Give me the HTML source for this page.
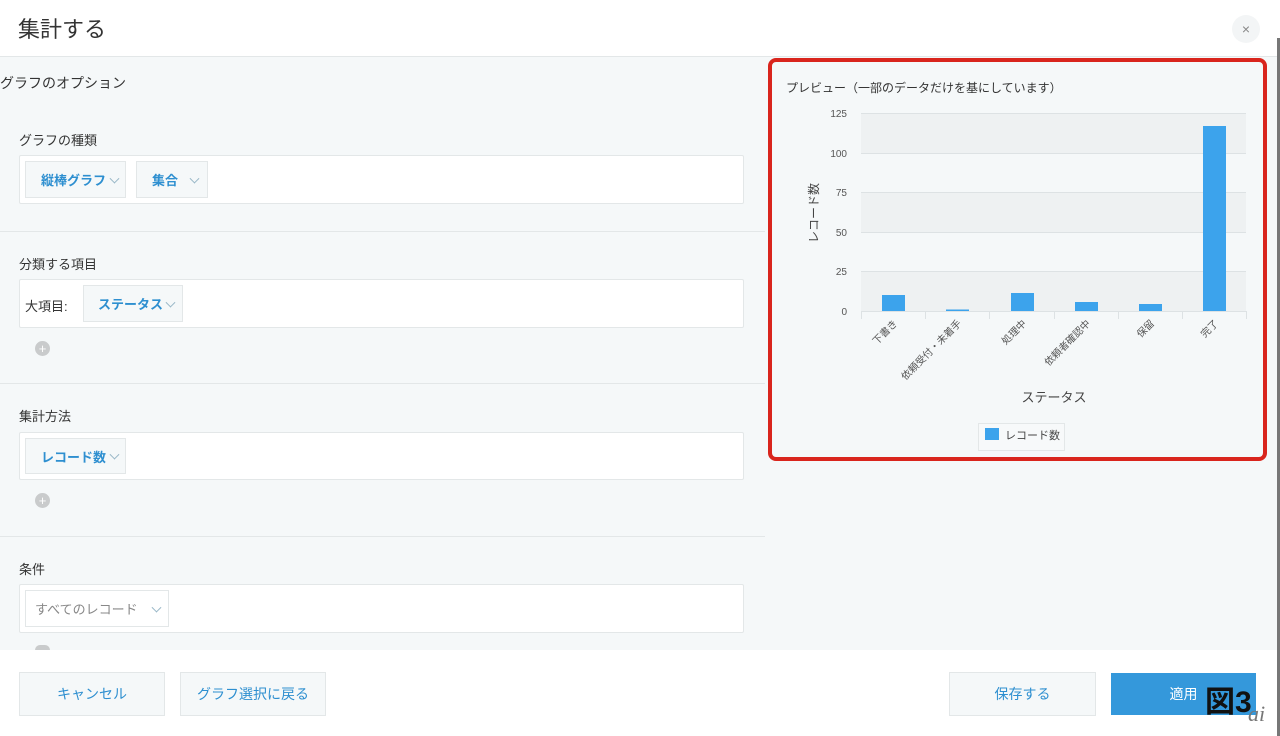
<!DOCTYPE html>
<html><head><meta charset="utf-8"><style>
*{box-sizing:border-box;margin:0;padding:0}
body{width:1280px;height:736px;overflow:hidden;background:#fff;font-family:"Liberation Sans","Noto Sans CJK JP",sans-serif;position:relative;color:#333}
.a{position:absolute}
.hdr{left:0;top:0;width:1277px;height:57px;background:#fff;border-bottom:1px solid #e3e7e8}
.body{left:0;top:57px;width:1277px;height:593px;background:#f5f8f9}
.lbl{font-size:13px;color:#333}
.box{background:#fff;border:1px solid #e3e7e8;border-radius:2px}
.dd{background:#f5f8f9;border:1px solid #e3e7e8;color:#2e8fd0;font-weight:bold;font-size:13px;display:flex;align-items:center}
.dd i{position:absolute;top:50%;width:7px;height:7px;border-right:1px solid #9ab8c8;border-bottom:1px solid #9ab8c8;transform:translateY(-70%) rotate(45deg)}
.sep{height:1px;background:#e3e7e8;left:0;width:765px}
.plus{width:15px;height:15px;border-radius:50%;background:#c9cbcc;color:#fff;font-size:13px;line-height:15px;text-align:center}
.btn{border:1px solid #e3e7e8;background:#f5f8f9;color:#2e8fd0;font-size:14px;display:flex;align-items:center;justify-content:center}
</style></head><body>
<div class="a hdr"></div>
<div class="a" style="left:18px;top:12px;font-size:22px;color:#333">集計する</div>
<div class="a" style="left:1232px;top:15px;width:28px;height:28px;border-radius:50%;background:#f3f5f6;color:#888;text-align:center;line-height:28px;font-size:14px">×</div>
<div class="a" style="left:1277px;top:38px;width:3px;height:698px;background:#777"></div>
<div class="a body"></div>
<div class="a lbl" style="left:0;top:73px;font-size:14px">グラフのオプション</div>

<div class="a lbl" style="left:19px;top:130px">グラフの種類</div>
<div class="a box" style="left:19px;top:155px;width:725px;height:49px"></div>
<div class="a dd" style="left:25px;top:161px;width:101px;height:37px;padding-left:15px">縦棒グラフ<i style="left:85px"></i></div>
<div class="a dd" style="left:136px;top:161px;width:72px;height:37px;padding-left:15px">集合<i style="left:54px"></i></div>
<div class="a sep" style="top:231px"></div>

<div class="a lbl" style="left:19px;top:254px">分類する項目</div>
<div class="a box" style="left:19px;top:279px;width:725px;height:49px"></div>
<div class="a lbl" style="left:25px;top:296px">大項目:</div>
<div class="a dd" style="left:83px;top:285px;width:100px;height:37px;padding-left:14px">ステータス<i style="left:83px"></i></div>
<div class="a plus" style="left:35px;top:341px">+</div>
<div class="a sep" style="top:383px"></div>

<div class="a lbl" style="left:19px;top:406px">集計方法</div>
<div class="a box" style="left:19px;top:432px;width:725px;height:48px"></div>
<div class="a dd" style="left:25px;top:438px;width:101px;height:36px;padding-left:15px">レコード数<i style="left:85px"></i></div>
<div class="a plus" style="left:35px;top:493px">+</div>
<div class="a sep" style="top:536px"></div>

<div class="a lbl" style="left:19px;top:559px">条件</div>
<div class="a box" style="left:19px;top:584px;width:725px;height:49px"></div>
<div class="a dd" style="left:25px;top:590px;width:144px;height:37px;padding-left:9px;background:#fff;color:#888;font-weight:normal">すべてのレコード<i style="left:127px"></i></div>
<div class="a plus" style="left:35px;top:645px;height:5px;border-radius:8px 8px 0 0"></div>

<div class="a" style="left:768px;top:58px;width:499px;height:403px;border:4px solid #d9251d;border-radius:8px;background:#f5f8f9"></div>
<svg class="a" style="left:0;top:0" width="1280" height="736" font-family="Liberation Sans, Noto Sans CJK JP, sans-serif">
<text x="786" y="92" font-size="12" fill="#333">プレビュー（一部のデータだけを基にしています）</text>
<rect x="861" y="113" width="385" height="40" fill="#eef1f2"/>
<rect x="861" y="192" width="385" height="40" fill="#eef1f2"/>
<rect x="861" y="271" width="385" height="40" fill="#eef1f2"/>
<g stroke="#dde2e4" stroke-width="1">
<line x1="861" y1="113.5" x2="1246" y2="113.5"/><line x1="861" y1="153.5" x2="1246" y2="153.5"/><line x1="861" y1="192.5" x2="1246" y2="192.5"/><line x1="861" y1="232.5" x2="1246" y2="232.5"/><line x1="861" y1="271.5" x2="1246" y2="271.5"/><line x1="861" y1="311.5" x2="1246" y2="311.5"/>
<line x1="861.5" y1="311" x2="861.5" y2="319"/><line x1="925.5" y1="311" x2="925.5" y2="319"/><line x1="989.5" y1="311" x2="989.5" y2="319"/><line x1="1054.5" y1="311" x2="1054.5" y2="319"/><line x1="1118.5" y1="311" x2="1118.5" y2="319"/><line x1="1182.5" y1="311" x2="1182.5" y2="319"/><line x1="1246.5" y1="311" x2="1246.5" y2="319"/>
</g>
<g font-size="10" fill="#555" text-anchor="end">
<text x="847" y="117">125</text><text x="847" y="157">100</text><text x="847" y="196">75</text><text x="847" y="236">50</text><text x="847" y="275">25</text><text x="847" y="315">0</text>
</g>
<g fill="#3ca3ec">
<rect x="882" y="295" width="23" height="16"/><rect x="946" y="309.5" width="23" height="1.5"/><rect x="1011" y="293" width="23" height="18"/><rect x="1075" y="302" width="23" height="9"/><rect x="1139" y="304" width="23" height="7"/><rect x="1203" y="126" width="23" height="185"/>
</g>
<g font-size="10" fill="#555" text-anchor="end">
<text transform="translate(898,324) rotate(-45)">下書き</text>
<text transform="translate(962,324) rotate(-45)">依頼受付・未着手</text>
<text transform="translate(1027,324) rotate(-45)">処理中</text>
<text transform="translate(1091,324) rotate(-45)">依頼者確認中</text>
<text transform="translate(1155,324) rotate(-45)">保留</text>
<text transform="translate(1219,324) rotate(-45)">完了</text>
</g>
<text x="1054" y="402" font-size="13" fill="#444" text-anchor="middle">ステータス</text>
<text transform="translate(818,213) rotate(-90)" font-size="12" fill="#444" text-anchor="middle">レコード数</text>
<rect x="978.5" y="423.5" width="86" height="27" fill="#f7f9fa" stroke="#e3e7e8"/>
<rect x="985" y="428" width="14" height="12" fill="#3ca3ec"/>
<text x="1005" y="439" font-size="11" fill="#444">レコード数</text>
</svg>

<div class="a btn" style="left:19px;top:672px;width:146px;height:44px">キャンセル</div>
<div class="a btn" style="left:180px;top:672px;width:146px;height:44px">グラフ選択に戻る</div>
<div class="a btn" style="left:949px;top:672px;width:147px;height:44px">保存する</div>
<div class="a btn" style="left:1111px;top:673px;width:145px;height:42px;background:#3498db;border-color:#3498db;color:#fff">適用</div>
<div class="a" style="left:1205px;top:688px;font-size:30px;font-weight:bold;color:#111;line-height:1">図3</div>
<div class="a" style="left:1248px;top:703px;font-size:22px;font-style:italic;font-family:'Liberation Serif',serif;color:#777;line-height:1">ai</div>
</body></html>
